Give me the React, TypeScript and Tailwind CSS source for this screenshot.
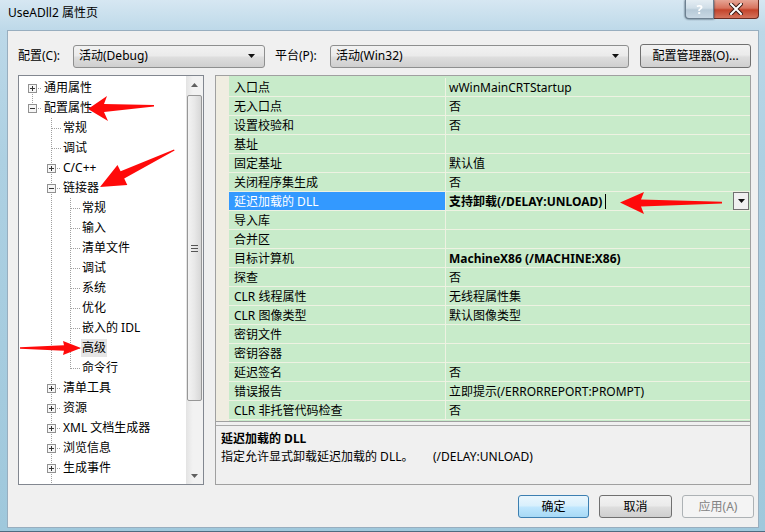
type Guide = 'none' | 'full' | 'top' | 'bottom';

type TreeRow = { label: string; guides: Guide[]; box?: '+' | '-'; selected?: boolean };

const treeRows: TreeRow[] = [
  { label: '通用属性', guides: ['bottom'], box: '+' },
  { label: '配置属性', guides: ['top'], box: '-' },
  { label: '常规', guides: ['none', 'full'] },
  { label: '调试', guides: ['none', 'full'] },
  { label: 'C/C++', guides: ['none', 'full'], box: '+' },
  { label: '链接器', guides: ['none', 'full'], box: '-' },
  { label: '常规', guides: ['none', 'full', 'full'] },
  { label: '输入', guides: ['none', 'full', 'full'] },
  { label: '清单文件', guides: ['none', 'full', 'full'] },
  { label: '调试', guides: ['none', 'full', 'full'] },
  { label: '系统', guides: ['none', 'full', 'full'] },
  { label: '优化', guides: ['none', 'full', 'full'] },
  { label: '嵌入的 IDL', guides: ['none', 'full', 'full'] },
  { label: '高级', guides: ['none', 'full', 'full'], selected: true },
  { label: '命令行', guides: ['none', 'full', 'top'] },
  { label: '清单工具', guides: ['none', 'full'], box: '+' },
  { label: '资源', guides: ['none', 'full'], box: '+' },
  { label: 'XML 文档生成器', guides: ['none', 'full'], box: '+' },
  { label: '浏览信息', guides: ['none', 'full'], box: '+' },
  { label: '生成事件', guides: ['none', 'full'], box: '+' },
  { label: '', guides: ['none', 'full'] },
];

type PropRow = { name: string; value: string; bold?: boolean; selected?: boolean };

const props: PropRow[] = [
  { name: '入口点', value: 'wWinMainCRTStartup' },
  { name: '无入口点', value: '否' },
  { name: '设置校验和', value: '否' },
  { name: '基址', value: '' },
  { name: '固定基址', value: '默认值' },
  { name: '关闭程序集生成', value: '否' },
  { name: '延迟加载的 DLL', value: '支持卸载(/DELAY:UNLOAD)', bold: true, selected: true },
  { name: '导入库', value: '' },
  { name: '合并区', value: '' },
  { name: '目标计算机', value: 'MachineX86 (/MACHINE:X86)', bold: true },
  { name: '探查', value: '否' },
  { name: 'CLR 线程属性', value: '无线程属性集' },
  { name: 'CLR 图像类型', value: '默认图像类型' },
  { name: '密钥文件', value: '' },
  { name: '密钥容器', value: '' },
  { name: '延迟签名', value: '否' },
  { name: '错误报告', value: '立即提示(/ERRORREPORT:PROMPT)' },
  { name: 'CLR 非托管代码检查', value: '否' },
];

function GuideCell({ kind, own, box }: { kind: Guide; own: boolean; box?: '+' | '-' }) {
  const dot = { stroke: '#a0a0a0', strokeWidth: 1, strokeDasharray: '1 1' };
  return (
    <svg width="19" height="20" className="shrink-0">
      {kind === 'full' && <line x1="9.5" y1="0" x2="9.5" y2="20" {...dot} />}
      {kind === 'top' && <line x1="9.5" y1="0" x2="9.5" y2="11" {...dot} />}
      {kind === 'bottom' && <line x1="9.5" y1="10" x2="9.5" y2="20" {...dot} />}
      {own && <line x1={box ? 15 : 10} y1="10.5" x2="19" y2="10.5" {...dot} />}
      {box && (
        <g>
          <rect x="5.5" y="6.5" width="8" height="8" fill="#f6f6f6" stroke="#919191" />
          <line x1="7" y1="10.5" x2="12" y2="10.5" stroke="#333" />
          {box === '+' && <line x1="9.5" y1="8" x2="9.5" y2="13" stroke="#333" />}
        </g>
      )}
    </svg>
  );
}

function Combo({ text, width }: { text: string; width: string }) {
  return (
    <div
      className={`${width} h-[23px] flex items-center justify-between pl-[5px] pr-[8px] rounded-[3px] border border-[#8e8f8f] bg-[linear-gradient(180deg,#f2f2f2_0%,#ebebeb_45%,#dddddd_55%,#cfcfcf_100%)]`}
    >
      <span>{text}</span>
      <svg width="8" height="5">
        <polygon points="0,0 7,0 3.5,4" fill="#111" />
      </svg>
    </div>
  );
}

function Button({ label, kind, width }: { label: string; kind?: 'default' | 'disabled'; width: string }) {
  const style =
    kind === 'default'
      ? 'border-[#3c7fb1] bg-[linear-gradient(180deg,#eaf6fd_0%,#d9f0fc_45%,#bee6fd_55%,#a7d9f5_100%)] text-black'
      : kind === 'disabled'
        ? 'border-[#adb2b5] bg-[#f4f4f4] text-[#838383]'
        : 'border-[#707070] bg-[linear-gradient(180deg,#f2f2f2_0%,#ebebeb_45%,#dddddd_55%,#cfcfcf_100%)] text-black';
  return (
    <div className={`${width} h-[23px] flex items-center justify-center rounded-[3px] border ${style}`}>{label}</div>
  );
}

export default function App() {
  return (
    <div className="relative w-[765px] h-[532px] overflow-hidden flex flex-col px-[7px] pr-[6px] pb-[3px] border-b border-[#4d6b80] bg-[linear-gradient(180deg,#d6e7f2_0%,#bcd8e8_6%,#add0e2_30%,#9fc8dc_100%)] font-['Noto_Sans','Noto_Sans_CJK_SC',sans-serif] text-[12px] leading-none text-black">
      {/* Title bar */}
      <div className="h-[30px] flex items-start justify-between shrink-0">
        <div className="pt-[7px] pl-[1px] text-[12px]">UseADll2 属性页</div>
        <div className="flex">
          <div className="w-[29px] h-[19px] flex items-center justify-center rounded-bl-[4px] border border-t-0 border-[#6d8091] bg-[linear-gradient(180deg,#e4edf3_0%,#d0dee8_45%,#b7cad8_55%,#c8d8e4_100%)] text-white font-bold text-[13px] drop-shadow-[0_0_1px_#2b3f50]">
            ?
          </div>
          <div className="w-[45px] h-[19px] flex items-center justify-center rounded-br-[4px] border border-t-0 border-l-0 border-[#6a2c22] bg-[linear-gradient(180deg,#e6a595_0%,#d7735e_45%,#c4442b_55%,#d4735c_100%)]">
            <svg width="14" height="12" viewBox="0 0 14 12">
              <path d="M2 1 L12 11 M12 1 L2 11" stroke="#3a1a14" strokeWidth="4" strokeLinecap="square" />
              <path d="M2 1 L12 11 M12 1 L2 11" stroke="#fff" strokeWidth="2" strokeLinecap="square" />
            </svg>
          </div>
        </div>
      </div>

      {/* Dialog body */}
      <div className="flex-1 flex flex-col bg-[#f0f0f0] border border-[#98aebf] pl-[10px]">
        {/* Configuration bar */}
        <div className="flex items-center h-[24px] mt-[13px] pr-[7px]">
          <span className="w-[55px]">配置(C):</span>
          <Combo text="活动(Debug)" width="w-[192px]" />
          <span className="w-[55px] ml-[10px]">平台(P):</span>
          <Combo text="活动(Win32)" width="w-[299px]" />
          <div className="ml-[11px] w-[111px] h-[24px] flex items-center justify-center rounded-[3px] border border-[#707070] bg-[linear-gradient(180deg,#f2f2f2_0%,#ebebeb_45%,#dddddd_55%,#cfcfcf_100%)]">
            配置管理器(O)...
          </div>
        </div>

        {/* Tree + property grid */}
        <div className="flex mt-[7px] h-[410px] pr-[7px]">
          {/* Tree */}
          <div className="w-[186px] h-full flex border border-[#828790] bg-white">
            <div className="flex-1 overflow-hidden pt-[2px] pl-[4px]">
              {treeRows.map((r, i) => (
                <div key={i} className="flex items-center h-[20px]">
                  {r.guides.map((g, c) => (
                    <GuideCell
                      key={c}
                      kind={g}
                      own={c === r.guides.length - 1}
                      box={c === r.guides.length - 1 ? r.box : undefined}
                    />
                  ))}
                  {r.label && (
                    <span
                      className={`ml-[1px] px-[1px] h-[18px] flex items-center whitespace-nowrap ${
                        r.selected ? 'bg-[#e5e5e5]' : ''
                      }`}
                    >
                      {r.label}
                    </span>
                  )}
                </div>
              ))}
            </div>
            {/* Scrollbar */}
            <div className="w-[17px] flex flex-col bg-[linear-gradient(90deg,#e3e3e3_0%,#f2f2f2_40%,#f2f2f2_100%)]">
              <div className="h-[17px] flex items-center justify-center">
                <svg width="7" height="4">
                  <polygon points="3.5,0 7,4 0,4" fill="#606060" />
                </svg>
              </div>
              <div className="flex-1 px-[1px] pt-[2px]">
                <div className="h-[306px] rounded-[2px] border border-[#979797] bg-[linear-gradient(90deg,#f3f3f3_0%,#e8e8e8_50%,#d7d7d7_100%)] flex flex-col items-center justify-center gap-[2px]">
                  <div className="w-[7px] h-[1px] bg-[#555]" />
                  <div className="w-[7px] h-[1px] bg-[#555]" />
                  <div className="w-[7px] h-[1px] bg-[#555]" />
                </div>
              </div>
              <div className="h-[17px] flex items-center justify-center">
                <svg width="7" height="4">
                  <polygon points="0,0 7,0 3.5,4" fill="#606060" />
                </svg>
              </div>
            </div>
          </div>

          {/* Property grid */}
          <div className="ml-[11px] flex-1 h-full flex flex-col border border-[#a0a0a0] bg-[#f0f0f0]">
            <div className="flex h-[345px]">
              <div className="w-[13px] bg-[#f0ede1]" />
              <div className="flex-1 pt-[2px] bg-[#c8ebca]">
                {props.map((p, i) => (
                  <div key={i} className="flex h-[19px] border-b border-[#eef2e2]">
                    <div
                      className={`w-[217px] flex items-center pl-[5px] pt-[1px] border-r border-[#eef2e2] ${
                        p.selected ? 'bg-[#3399ff] text-white' : ''
                      }`}
                    >
                      {p.name}
                    </div>
                    <div className={`flex-1 flex items-center pl-[3px] pr-[1px] ${p.bold ? 'font-bold' : ''}`}>
                      <span className="pt-[1px]">{p.value}</span>
                      {p.selected && <span className="ml-[3px] w-[1px] h-[15px] bg-black" />}
                      {p.selected && (
                        <div className="ml-auto w-[16px] h-[18px] flex items-center justify-center border border-[#707070] bg-[#f0f0f0]">
                          <svg width="7" height="4">
                            <polygon points="0,0 7,0 3.5,4" fill="#111" />
                          </svg>
                        </div>
                      )}
                    </div>
                  </div>
                ))}
              </div>
            </div>
            <div className="h-[1px] bg-[#a0a0a0]" />
            <div className="h-[3px]" />
            <div className="h-[1px] bg-[#a9a9a9]" />
            <div className="flex-1 pl-[5px] pt-[7px] flex flex-col gap-[6px]">
              <div className="font-bold">延迟加载的 DLL</div>
              <div className="flex">
                <span className="w-[212px]">指定允许显式卸载延迟加载的 DLL。</span>
                <span>(/DELAY:UNLOAD)</span>
              </div>
            </div>
          </div>
        </div>

        {/* Dialog buttons */}
        <div className="flex justify-end mt-[10px] pr-[4px] gap-[10px]">
          <Button label="确定" kind="default" width="w-[71px]" />
          <Button label="取消" width="w-[73px]" />
          <Button label="应用(A)" kind="disabled" width="w-[72px]" />
        </div>
      </div>

      {/* Red annotation arrows */}
      <svg className="absolute inset-0 pointer-events-none" width="765" height="532">
        <polygon points="88,109 107,96 104,104 154,105 154,106.5 104,112 108,121" fill="#ff0a0a" />
        <polygon points="100,187 117.5,165 120.6,171.2 174,149.5 174.6,150.6 124.2,178.4 127.3,185" fill="#ff0a0a" />
        <polygon points="20,347.3 64,345.3 63,341 81,348 63,355 64,350.7 20,348.7" fill="#ff0a0a" />
        <polygon points="620,202.5 644,192 641,199.5 722,201.8 722,203.4 641,206.5 644,214" fill="#ff0a0a" />
      </svg>
    </div>
  );
}
